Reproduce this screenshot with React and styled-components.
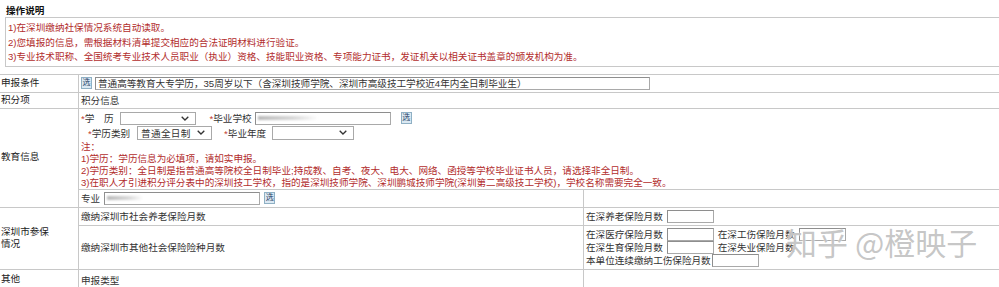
import React from 'react';
import styled, { createGlobalStyle } from 'styled-components';

const GlobalStyle = createGlobalStyle`
  html, body {
    margin: 0;
    padding: 0;
    background: #fff;
  }
  body {
    font-family: "Liberation Sans", "Noto Sans CJK SC", sans-serif;
    font-size: 9.6px;
    color: #333;
  }
`;

const Page = styled.div`
  position: relative;
  width: 999px;
  height: 287px;
  overflow: hidden;
`;

const Title = styled.div`
  padding: 5px 0 0 6px;
  height: 12px;
  line-height: 12px;
  font-weight: bold;
  color: #111;
`;

const NoticeBox = styled.div`
  margin-left: 5px;
  border: 1px solid #c8c8c8;
  border-right: none;
  padding: 3px 0 1px 2px;
  color: #b22d2d;
  line-height: 14.5px;
`;

const Sheet = styled.div`
  margin-top: 7px;
  display: grid;
  grid-template-columns: 78px 504px 1fr;
  grid-template-rows: 17px 15px 80px 17px 17px 43px 20px;
  gap: 1px;
  padding-top: 1px;
  background: #c8c8c8;
`;

const Cell = styled.div`
  background: #fff;
  display: flex;
  align-items: ${p => (p.$top ? 'stretch' : 'center')};
  flex-direction: ${p => (p.$column ? 'column' : 'row')};
  padding-left: 2px;
  grid-column: ${p => p.$span || 'auto'};
  grid-row: ${p => p.$rows || 'auto'};
  white-space: nowrap;
  overflow: hidden;
`;

const LabelCell = styled(Cell)`
  padding-left: 1px;
  color: #222;
  white-space: normal;
  line-height: 12.5px;
`;

const Line = styled.div`
  display: flex;
  align-items: center;
  height: ${p => p.$h || 13}px;
  margin-bottom: ${p => p.$mb || 0}px;
  padding-left: ${p => p.$indent || 0}px;
`;

const Text = styled.span`
  margin-left: ${p => p.$ml || 0}px;
  color: #333;
`;

const Star = styled.span`
  color: #c0392b;
`;

const TextInput = styled.div`
  position: relative;
  box-sizing: border-box;
  width: ${p => p.$w}px;
  height: ${p => p.$h || 13}px;
  margin-left: ${p => p.$ml || 0}px;
  border: 1px solid #a9a9a9;
  border-top-color: #8e8e8e;
  border-left-color: #8e8e8e;
  background: #fff;
  display: flex;
  align-items: center;
  padding-left: 2px;
  overflow: hidden;
  color: #333;
`;

const Smudge = styled.div`
  width: ${p => p.$w}px;
  height: 4px;
  background: linear-gradient(90deg, #b8b8b8, #d8d8d8 60%, rgba(230, 230, 230, 0));
  filter: blur(1px);
`;

const SelectBox = styled.div`
  box-sizing: border-box;
  width: ${p => p.$w}px;
  height: ${p => p.$h || 13}px;
  margin-left: ${p => p.$ml || 0}px;
  border: 1px solid #a9a9a9;
  background: #fff;
  display: flex;
  align-items: center;
  padding: 0 6px 0 3px;
  color: #333;
`;

const SelectValue = styled.span`
  flex: 1;
  letter-spacing: 0.3px;
`;

const PickButton = styled.span`
  display: inline-flex;
  align-items: center;
  justify-content: center;
  box-sizing: border-box;
  width: 11px;
  height: 12px;
  margin-left: ${p => p.$ml || 0}px;
  border: 1px solid #8fb0c4;
  background: #dbe9f3;
  color: #1f3f66;
  font-size: 8px;
  line-height: 1;
`;

const EduBlock = styled.div`
  display: flex;
  flex-direction: column;
  padding-top: 3px;
  width: 100%;
`;

const Notes = styled.div`
  margin-top: 1px;
  color: #b22d2d;
  line-height: 12px;
`;

const Stack = styled.div`
  display: flex;
  flex-direction: column;
  padding-top: 2px;
`;

const Watermark = styled.div`
  position: absolute;
  left: 786px;
  top: 222px;
  font-family: "Noto Sans CJK SC", sans-serif;
  font-size: 31px;
  line-height: 40px;
  color: rgba(150, 150, 150, 0.55);
  text-shadow: 0 0 1px rgba(255, 255, 255, 0.9), 0 0 2px rgba(255, 255, 255, 0.6);
  white-space: nowrap;
  pointer-events: none;
`;

const Chevron = () => (
  <svg width="8" height="5" viewBox="0 0 8 5">
    <polyline points="0.7,0.7 4,4 7.3,0.7" fill="none" stroke="#333" strokeWidth="1.3" />
  </svg>
);

const Select = ({ w, h, ml, value }) => (
  <SelectBox $w={w} $h={h} $ml={ml}>
    <SelectValue>{value}</SelectValue>
    <Chevron />
  </SelectBox>
);

const notices = [
  '1)在深圳缴纳社保情况系统自动读取。',
  '2)您填报的信息，需根据材料清单提交相应的合法证明材料进行验证。',
  '3)专业技术职称、全国统考专业技术人员职业（执业）资格、技能职业资格、专项能力证书，发证机关以相关证书盖章的颁发机构为准。',
];

const eduNotes = [
  '注：',
  '1)学历：学历信息为必填项，请如实申报。',
  '2)学历类别：全日制是指普通高等院校全日制毕业;持成教、自考、夜大、电大、网络、函授等学校毕业证书人员，请选择非全日制。',
  '3)在职人才引进积分评分表中的深圳技工学校，指的是深圳技师学院、深圳鹏城技师学院(深圳第二高级技工学校)，学校名称需要完全一致。',
];

export default function App() {
  return (
    <Page>
      <GlobalStyle />
      <Title>操作说明</Title>
      <NoticeBox>
        {notices.map(n => (
          <div key={n}>{n}</div>
        ))}
      </NoticeBox>

      <Sheet>
        <LabelCell>申报条件</LabelCell>
        <Cell $span="2 / 4">
          <PickButton>选</PickButton>
          <TextInput $w={555} $ml={3}>
            普通高等教育大专学历，35周岁以下（含深圳技师学院、深圳市高级技工学校近4年内全日制毕业生）
          </TextInput>
        </Cell>

        <LabelCell>积分项</LabelCell>
        <Cell $span="2 / 4">积分信息</Cell>

        <LabelCell $rows="3 / 5">教育信息</LabelCell>
        <Cell $span="2 / 4" $top>
          <EduBlock>
            <Line $h={13} $mb={1}>
              <Text><Star>*</Star>学　历</Text>
              <Select w={76} h={13} ml={6} />
              <Text $ml={14}><Star>*</Star>毕业学校</Text>
              <TextInput $w={136} $ml={3}>
                <Smudge $w={60} />
              </TextInput>
              <PickButton $ml={10}>选</PickButton>
            </Line>
            <Line $h={14} $indent={7}>
              <Text><Star>*</Star>学历类别</Text>
              <Select w={75} h={14} ml={7} value="普通全日制" />
              <Text $ml={12}><Star>*</Star>毕业年度</Text>
              <Select w={82} h={14} ml={6} />
            </Line>
            <Notes>
              {eduNotes.map(n => (
                <div key={n}>{n}</div>
              ))}
            </Notes>
          </EduBlock>
        </Cell>
        <Cell>
          <Text>专业</Text>
          <TextInput $w={156} $ml={4}>
            <Smudge $w={36} />
          </TextInput>
          <PickButton $ml={4}>选</PickButton>
        </Cell>
        <Cell />

        <LabelCell $rows="5 / 7">深圳市参保<br />情况</LabelCell>
        <Cell>缴纳深圳市社会养老保险月数</Cell>
        <Cell>
          <Text>在深养老保险月数</Text>
          <TextInput $w={47} $ml={4} />
        </Cell>
        <Cell>缴纳深圳市其他社会保险险种月数</Cell>
        <Cell $top>
          <Stack>
            <Line>
              <Text>在深医疗保险月数</Text>
              <TextInput $w={47} $ml={4} />
              <Text $ml={4}>在深工伤保险月数</Text>
              <TextInput $w={47} $ml={4} />
            </Line>
            <Line>
              <Text>在深生育保险月数</Text>
              <TextInput $w={47} $ml={4} />
              <Text $ml={4}>在深失业保险月数</Text>
            </Line>
            <Line>
              <Text>本单位连续缴纳工伤保险月数</Text>
              <TextInput $w={47} $ml={1} />
            </Line>
          </Stack>
        </Cell>

        <LabelCell>其他</LabelCell>
        <Cell>申报类型</Cell>
        <Cell />
      </Sheet>

      <Watermark>知乎 @橙映子</Watermark>
    </Page>
  );
}
